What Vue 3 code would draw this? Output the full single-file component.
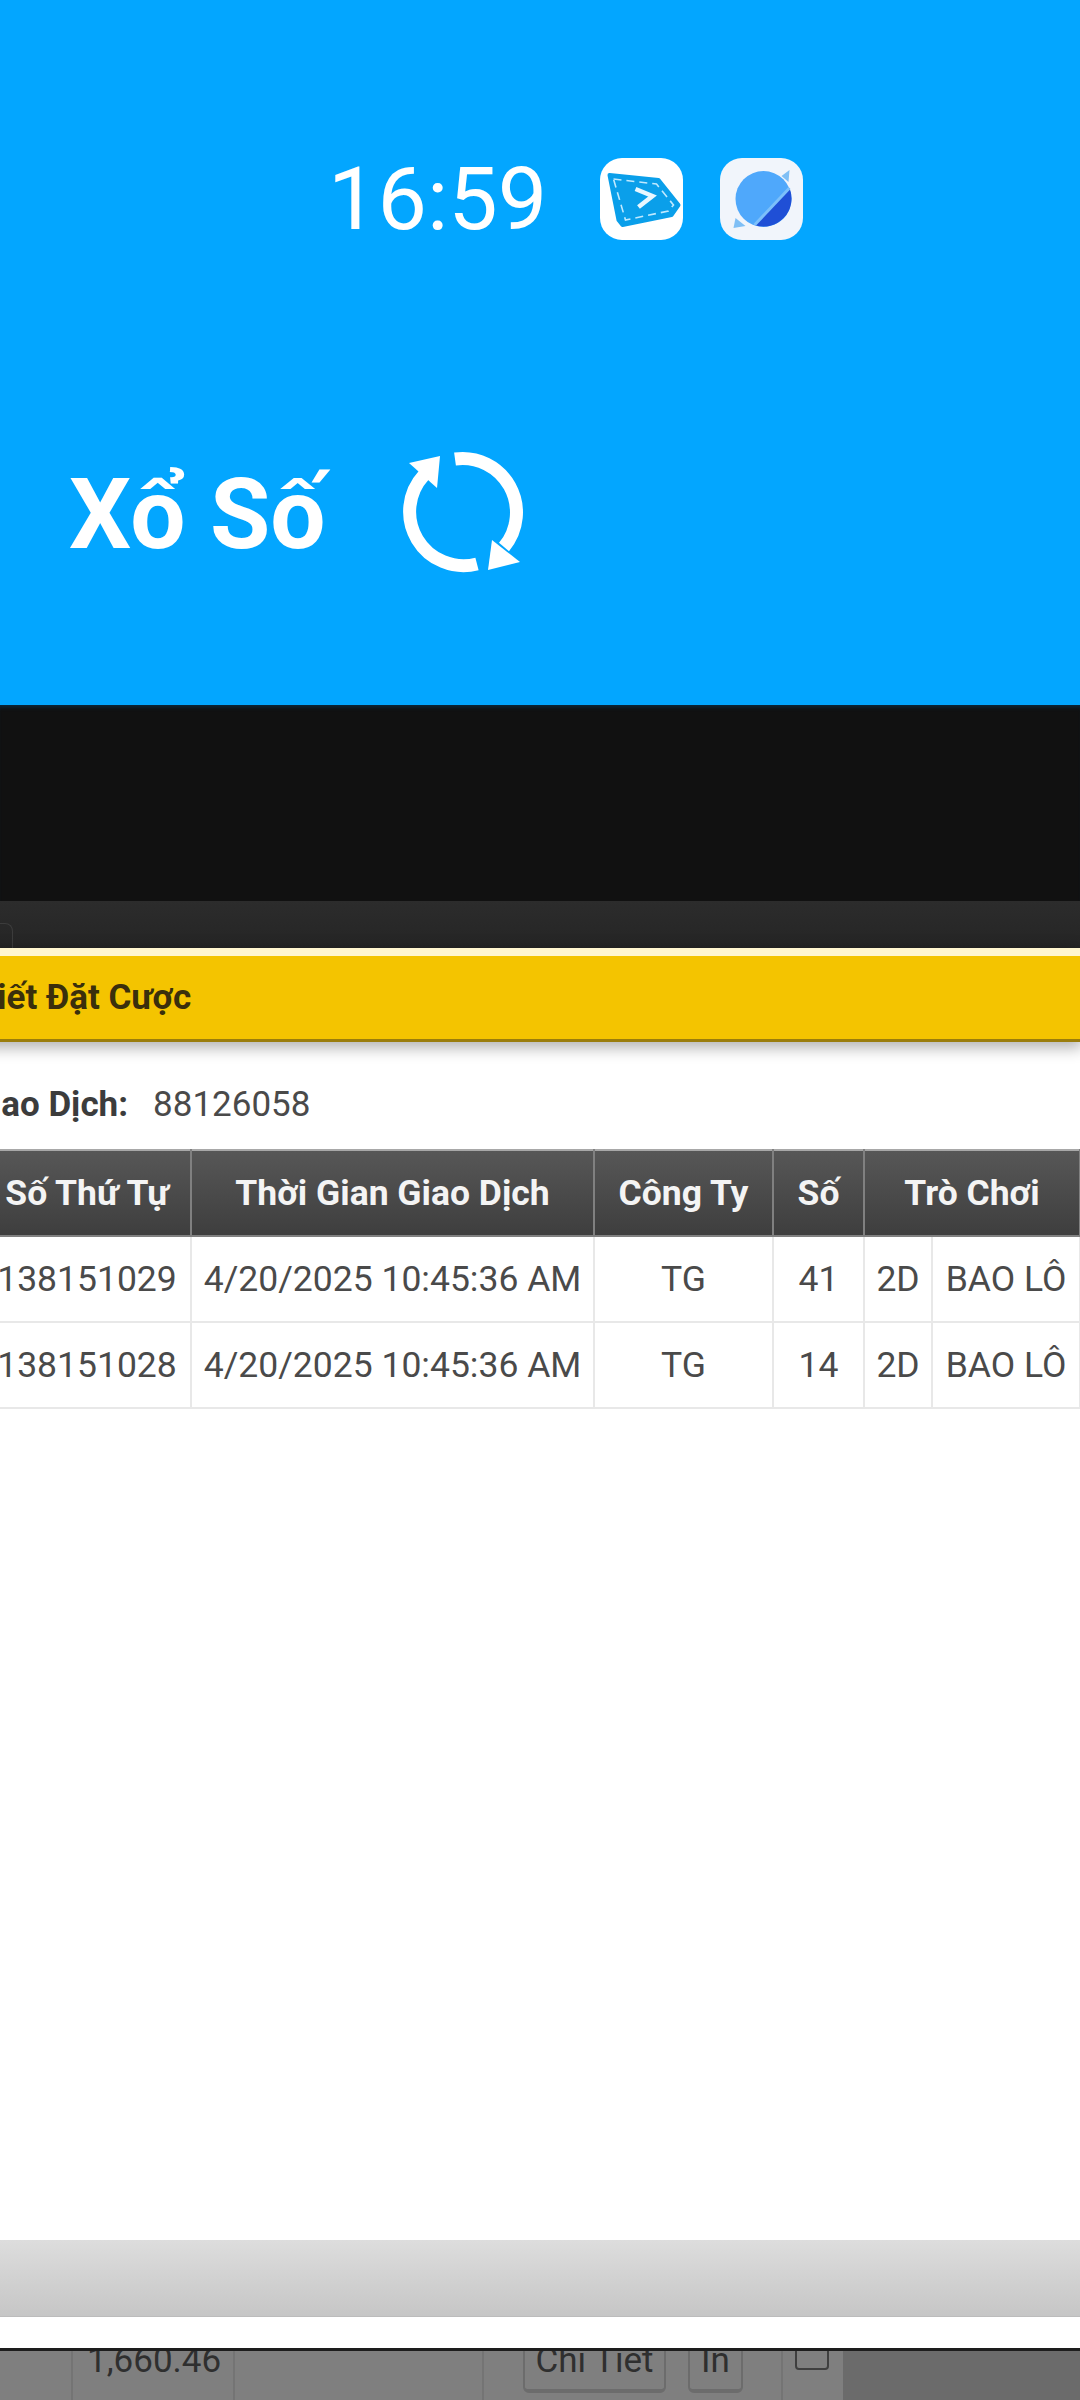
<script setup>
const rows = [
  { id: '138151029', time: '4/20/2025 10:45:36 AM', company: 'TG', num: '41', kind: '2D', game: 'BAO LÔ' },
  { id: '138151028', time: '4/20/2025 10:45:36 AM', company: 'TG', num: '14', kind: '2D', game: 'BAO LÔ' },
]
</script>

<template>
  <div class="screen">
    <section class="hero">
      <div class="status">
        <span class="clock">16:59</span>
        <span class="app-icon">
          <svg viewBox="0 0 80 82" width="83" height="82">
            <path d="M8 17 L57 22 L77 47 L70 57 L21 67 L17 62 Z" fill="#0a9fea" stroke="#0a9fea" stroke-width="4" stroke-linejoin="round" />
            <path d="M12 21 L55 26 L72 47 L67 53 L24 62 Z" fill="none" stroke="#bfe9ff" stroke-width="1.6" stroke-dasharray="8 5" />
            <path d="M34 31 L51 38 L37 49" fill="none" stroke="#e8f7ff" stroke-width="4.5" />
          </svg>
        </span>
        <span class="app-icon app-icon--tint">
          <svg viewBox="0 0 80 82" width="83" height="82">
            <path d="M14 60 L12 70 L24 68 Z" fill="#7fbff5" />
            <path d="M60 18 L68 12 L67 24 Z" fill="#7fbff5" />
            <circle cx="42" cy="41" r="28" fill="#4fa8fb" />
            <path d="M68 30 A28 28 0 0 1 33 67 Z" fill="#1f4fd6" />
            <path d="M68 30 L33 67" fill="none" stroke="#7cc0fb" stroke-width="3" />
          </svg>
        </span>
      </div>
      <div class="heading">
        <h1>Xổ Số</h1>
        <svg class="refresh" viewBox="0 0 126 126" width="126" height="126">
          <path d="M24 26 A54 54 0 0 0 77 115" fill="none" stroke="#fff" stroke-width="13" />
          <path d="M40 7 L9 14 L37 39 Z" fill="#fff" />
          <path d="M55 10 A54 54 0 0 1 104 98" fill="none" stroke="#fff" stroke-width="13" />
          <path d="M92 91 L120 113 L88 121 Z" fill="#fff" />
        </svg>
      </div>
    </section>

    <div class="dark"></div>
    <div class="strip"><span class="tab"></span></div>

    <section class="modal">
      <header class="modal-title">Chi Tiết Đặt Cược</header>
      <p class="meta"><b>Mã Giao Dịch:</b><span>88126058</span></p>
      <table class="bets">
        <colgroup>
          <col class="c1" /><col class="c2" /><col class="c3" /><col class="c4" /><col class="c5" /><col class="c6" /><col class="c7" />
        </colgroup>
        <thead>
          <tr>
            <th>Số Thứ Tự</th>
            <th>Thời Gian Giao Dịch</th>
            <th>Công Ty</th>
            <th>Số</th>
            <th colspan="2">Trò Chơi</th>
            <th></th>
          </tr>
        </thead>
        <tbody>
          <tr v-for="row in rows" :key="row.id">
            <td>{{ row.id }}</td>
            <td>{{ row.time }}</td>
            <td>{{ row.company }}</td>
            <td>{{ row.num }}</td>
            <td>{{ row.kind }}</td>
            <td>{{ row.game }}</td>
            <td></td>
          </tr>
        </tbody>
      </table>
      <div class="modal-spacer"></div>
      <div class="modal-foot"></div>
      <div class="modal-end"></div>
    </section>

    <section class="behind">
      <div class="behind-row">
        <span class="cell cell-a"></span>
        <span class="cell cell-b">1,660.46</span>
        <span class="cell cell-c"></span>
        <span class="cell cell-d">
          <span class="btn btn-detail">Chi Tiết</span>
          <span class="btn btn-print">In</span>
        </span>
        <span class="cell cell-e"><span class="check"></span></span>
      </div>
    </section>
  </div>
</template>

<style scoped>
.screen {
  width: 1080px;
  height: 2400px;
  overflow: hidden;
  display: flex;
  flex-direction: column;
  font-family: Roboto, "Liberation Sans", sans-serif;
}
.hero {
  height: 705px;
  flex: none;
  background: #03a6ff;
  color: #fff;
  box-sizing: border-box;
  padding-top: 158px;
}
.status {
  display: flex;
  align-items: center;
  padding-left: 328px;
  height: 82px;
}
.clock {
  font-size: 88px;
  line-height: 82px;
  width: 272px;
}
.app-icon {
  width: 83px;
  height: 82px;
  border-radius: 22px;
  background: #fff;
  margin-right: 37px;
  display: block;
}
.app-icon--tint {
  background: #f1f5fb;
}
.app-icon svg {
  display: block;
}
.heading {
  display: flex;
  align-items: center;
  margin-top: 209px;
  padding-left: 69px;
}
.heading h1 {
  margin: 6px 0 0;
  font-size: 98px;
  line-height: 120px;
  font-weight: 700;
  width: 331px;
}
.refresh {
  display: block;
}
.dark {
  height: 196px;
  flex: none;
  background: #111;
  box-shadow: inset 0 5px 4px -3px #0a2a40;
}
.strip {
  height: 47px;
  flex: none;
  background: linear-gradient(#2c2c2c, #252525);
  display: flex;
  align-items: flex-end;
}
.tab {
  width: 13px;
  height: 25px;
  box-sizing: border-box;
  border: 1px solid #3c3c3c;
  border-left: 0;
  border-bottom: 0;
  border-top-right-radius: 8px;
}
.modal {
  height: 1400px;
  flex: none;
  display: flex;
  flex-direction: column;
  background: #fff;
}
.modal-title {
  height: 94px;
  flex: none;
  box-sizing: border-box;
  background: #f4c400;
  border-top: 8px solid #fff6cf;
  border-bottom: 3px solid #9a7d0c;
  box-shadow: 0 4px 14px 2px rgba(0, 0, 0, 0.3);
  font-size: 35px;
  font-weight: 700;
  line-height: 83px;
  color: #3a2f0c;
  white-space: nowrap;
  margin-left: -84px;
}
.meta {
  height: 107px;
  flex: none;
  margin: 0 0 0 -90px;
  box-sizing: border-box;
  padding-top: 41px;
  font-size: 35px;
  line-height: 44px;
  color: #4a4a4a;
  white-space: nowrap;
}
.meta b {
  color: #3c3c3c;
  margin-right: 25px;
}
.bets {
  flex: none;
  width: 1200px;
  margin-left: -18px;
  table-layout: fixed;
  border-collapse: collapse;
  font-size: 35.5px;
}
.c1 { width: 208px; }
.c2 { width: 403px; }
.c3 { width: 179px; }
.c4 { width: 91px; }
.c5 { width: 68px; }
.c6 { width: 148px; }
.c7 { width: 103px; }
.bets th {
  height: 84px;
  padding: 0;
  background: linear-gradient(#575757, #3e3e3e);
  border: 2px solid #808080;
  border-top-color: #a8a8a8;
  color: #f4f4f4;
  font-weight: 700;
  text-align: center;
  white-space: nowrap;
}
.bets td {
  height: 84px;
  padding: 0;
  border: 2px solid #e8e8e8;
  color: #4a4a4a;
  text-align: center;
  white-space: nowrap;
}
.modal-spacer {
  flex: 1;
}
.modal-foot {
  height: 77px;
  flex: none;
  background: linear-gradient(#dddddd, #c6c6c6);
  border-bottom: 1px solid #bcbcbc;
  box-sizing: border-box;
}
.modal-end {
  height: 31px;
  flex: none;
  background: #fff;
}
.behind {
  flex: 1;
  background: #6b6b6b;
  border-top: 3px solid #1d1d1d;
  overflow: hidden;
}
.behind-row {
  display: flex;
  width: 843px;
  height: 70px;
  margin-top: -18px;
  background: #7f7f7f;
  color: #2f2f2f;
  font-size: 35px;
}
.cell {
  box-sizing: border-box;
  border-right: 2px solid #747474;
  height: 100%;
  line-height: 56px;
  display: block;
  white-space: nowrap;
}
.cell-a { width: 73px; }
.cell-b { width: 162px; padding-left: 14px; }
.cell-c { width: 249px; }
.cell-d { width: 299px; display: flex; align-items: flex-start; padding-left: 39px; }
.cell-e { width: 60px; border-right: 0; padding-left: 12px; }
.btn {
  display: block;
  height: 60px;
  box-sizing: border-box;
  border: 2px solid #6c6c6c;
  border-bottom-width: 4px;
  border-radius: 6px;
  text-align: center;
  line-height: 52px;
}
.btn-detail { width: 143px; margin-right: 22px; }
.btn-print { width: 55px; }
.check {
  display: block;
  width: 34px;
  height: 37px;
  box-sizing: border-box;
  border: 2px solid #3f3f3f;
  border-radius: 4px;
}
</style>
